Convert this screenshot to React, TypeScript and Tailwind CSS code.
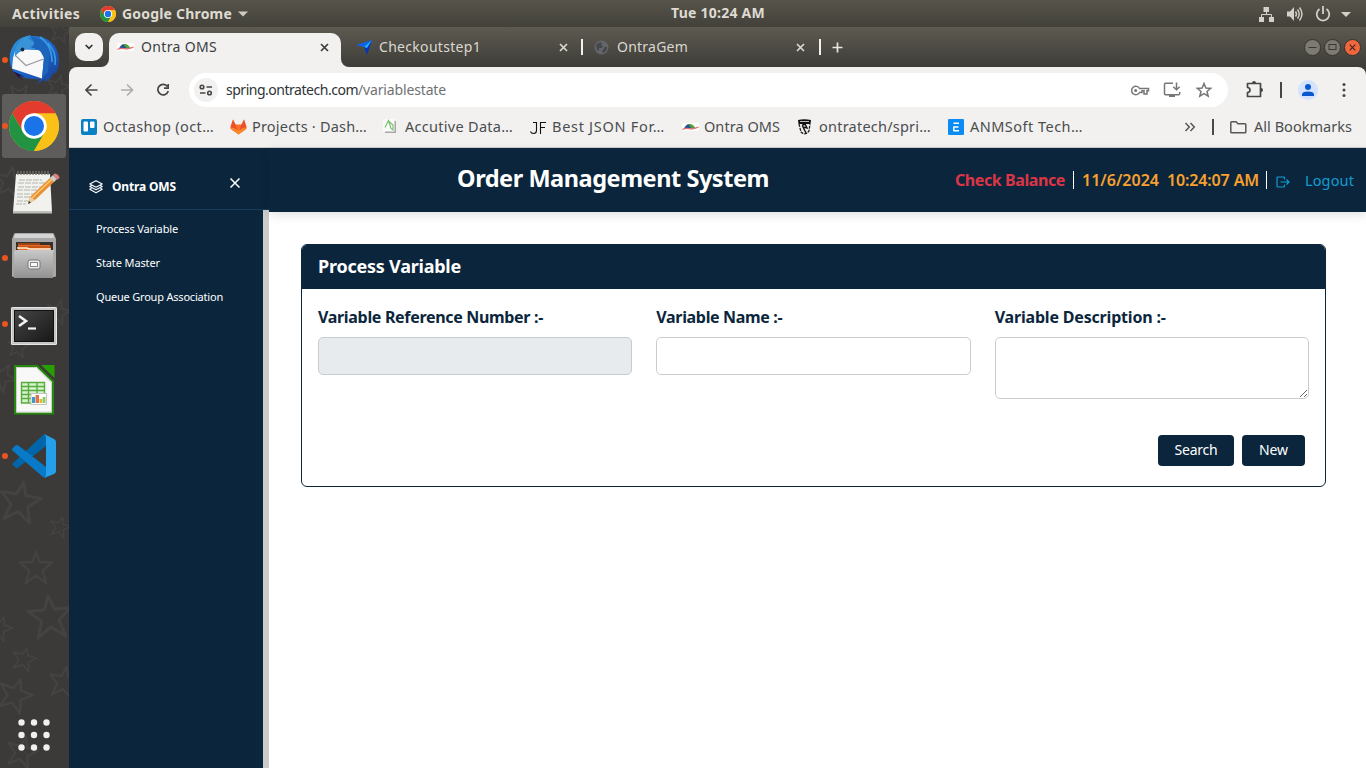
import { useLayoutEffect, useRef, type ReactNode } from "react";

/* Single line of text whose tracking is adjusted so that it spans `width` pixels. */
function Label({ text, width, className = "" }: { text: string; width: number; className?: string }) {
  const ref = useRef<HTMLSpanElement>(null);
  useLayoutEffect(() => {
    const el = ref.current;
    if (!el) return;
    el.style.letterSpacing = "0px";
    const natural = el.getBoundingClientRect().width;
    el.style.letterSpacing = `${(width - natural) / text.length}px`;
  }, [text, width]);
  return (
    <span className={`block shrink-0 whitespace-nowrap ${className}`} style={{ width }}>
      <span ref={ref}>{text}</span>
    </span>
  );
}

function ChromeLogo({ size }: { size: number }) {
  return (
    <svg width={size} height={size} viewBox="0 0 50 50" className="shrink-0">
      <circle cx="25" cy="25" r="25" fill="#fbc116" />
      <path d="M25 12.5 H46.7 A25 25 0 0 0 3.4 12.5 L14 31 Z" fill="#e33b2e" />
      <path d="M3.4 12.5 A25 25 0 0 0 25 50 L36 31.2 L14.2 31.2 Z" fill="#229342" />
      <path d="M25 50 A25 25 0 0 0 46.7 12.5 H25 L35.8 31.2 Z" fill="#fbc116" />
      <circle cx="25" cy="25" r="12.7" fill="#fff" />
      <circle cx="25" cy="25" r="10" fill="#1a73e8" />
    </svg>
  );
}

function Swoosh() {
  return (
    <svg width="17" height="16" viewBox="0 0 17 16" className="shrink-0">
      <rect y="4" width="17" height="8" fill="#fff" opacity=".75" />
      <path d="M2 9.500 Q5 3.500 9 5.500 L12 9.500 Z" fill="#23548c" />
      <path d="M6 5.200 Q11 4.500 13.500 9.500 L9.500 9 Z" fill="#54a03c" />
      <path d="M0.500 10.500 Q3 9 6 9.500 T10 10 T16.500 8" fill="none" stroke="#e9696c" strokeWidth="1.200" />
    </svg>
  );
}

function Cross({ className }: { className: string }) {
  return (
    <svg width="9" height="9" viewBox="0 0 9 9" className={className}>
      <path d="M1 1 L8 8 M8 1 L1 8" stroke="currentColor" strokeWidth="1.7" />
    </svg>
  );
}

function TopBar() {
  return (
    <div className="flex h-[27px] shrink-0 items-center bg-linear-to-b from-[#57544a] to-[#42413a] text-[14px] font-bold text-[#dfdbd2]">
      <Label text="Activities" width={68} className="ml-3" />
      <div className="ml-5 flex items-center">
        <ChromeLogo size={16} />
        <Label text="Google Chrome" width={110} className="ml-1.5" />
        <svg width="10" height="6" className="ml-[6px]"><path d="M0 0.5H10L5 5.5Z" fill="#cfccc4" /></svg>
      </div>
      <Label text="Tue 10:24 AM" width={94} className="ml-[423px] pb-0.5" />
      <svg width="94" height="20" viewBox="1258 3 94 20" className="ml-[493px]" fill="#d3d0c9">
        <path d="M1263.5 6h5.5v5h-5.500z M1259 16h5v5h-5z M1269 16h5v5h-5z" />
        <path d="M1266.500 11v3 M1261.500 16v-2.500h10v2.500" fill="none" stroke="#d3d0c9" />
        <path d="M1287 10.500h3l4-4.500v14l-4-4.500h-3z" />
        <g fill="none" stroke="#d3d0c9" strokeWidth="1.400">
          <path d="M1295.500 10.500q2 2.500 0 5M1297.500 8.500q3.500 4.500 0 9M1299.500 6.500q5 6.500 0 13" />
        </g>
        <path d="M1319.500 8a6.300 6.300 0 1 0 7 0M1323 5v8" fill="none" stroke="#d3d0c9" strokeWidth="1.800" />
        <path d="M1341 11h10l-5 5z" />
      </svg>
    </div>
  );
}

function DockItem({ running = false, active = false, children }: { running?: boolean; active?: boolean; children: ReactNode }) {
  return (
    <div className="h-[66px] w-[69px] shrink-0">
      <svg width="69" height="66" viewBox="0 0 69 66">
        {active && <rect x="2" y="1" width="64" height="64" rx="3" fill="#5f5d5b" />}
        {running && <circle cx="5" cy="33" r="3" fill="#e95420" />}
        {children}
      </svg>
    </div>
  );
}

const STAR = "M0 -17 L4 -6 L17 -6 L7 3 L11 16 L0 8 L-11 16 L-7 3 L-17 -6 L-4 -6 Z";
const STARS = [
  [60, 5, 0.6, 10], [20, 70, 0.8, 30], [10, 155, 0.9, 10], [58, 60, 0.7, 15], [58, 285, 0.7, 15], [18, 320, 0.6, 10],
  [2, 350, 0.8, 30], [20, 475, 1.2, 10], [60, 500, 0.6, 15], [36, 541, 0.95, 0], [50, 590, 1.25, -5],
  [0, 601, 0.7, 20], [24, 632, 0.7, 15], [15, 668, 1.0, 20], [64, 655, 0.9, 10], [22, 725, 0.9, 15],
];

function Dock() {
  return (
    <div className="relative flex w-[69px] shrink-0 flex-col bg-[#3b3a38]">
      <svg className="absolute inset-0" width="69" height="741">
        {STARS.map(([x, y, s, r]) => (
          <path key={`${x}-${y}`} d={STAR} transform={`translate(${x} ${y}) rotate(${r}) scale(${s})`} fill="none" stroke="#444341" strokeWidth="2.500" strokeLinejoin="round" />
        ))}
      </svg>
      <div className="relative flex grow flex-col">
        <DockItem running>
          <defs>
            <linearGradient id="tb" x1="0" y1="0" x2="1" y2="1"><stop offset="0" stopColor="#2f9be6" /><stop offset=".5" stopColor="#1c62c8" /><stop offset="1" stopColor="#173f93" /></linearGradient>
          </defs>
          <path d="M18 13 Q23 9 31 9 Q43 8 51 15 Q59 22 59 34 Q59 42 55 47 L54 45 Q51 52 45 55 L45 52 L37 57 L40 52 Q24 53 15 47 Q8 38 10 27 Q12 18 18 13Z" fill="url(#tb)" />
          <path d="M11 37 L13 44 L25 50 L19 49 L23 53 Q12 47 11 37Z" fill="#231047" />
          <path d="M15 24 L24 22.500 L40 23 L44 31 L42 51.500 L12 41.500 L13 31Z" fill="#f8f8f8" />
          <path d="M16 29 L26 38.500 L43.500 32" fill="none" stroke="#9a9aa0" strokeWidth="1.200" />
          <path d="M19 16 Q22 9 31 8 L28 12 Q35 14 37 20 L33 23 Q26 20 22 24 Q18 25 15 30 Q14 21 19 16Z" fill="#3993d7" />
          <path d="M30 9 Q48 12 49 27 L48 45 L42 51 L44 30 Q41 22 30 20 Q38 18 30 9Z" fill="#1d65bb" />
          <path d="M48 16q9 9 7 22M40 10q12 8 12 25" fill="none" stroke="#3a9be2" strokeWidth="1.600" />
          <circle cx="22.500" cy="22.500" r="1.900" fill="#172c4d" />
        </DockItem>
        <DockItem running active>
          <svg x="9" y="8" width="50" height="50"><ChromeLogo size={50} /></svg>
        </DockItem>
        <DockItem>
          <path d="M16 15H50L52 53H13Z" fill="#f1f1ee" />
          <path d="M13 52H52V54.500H13Z" fill="#bdbdb9" />
          <path d="M18 12v4M21 12v4M24 12v4M27 12v4M30 12v4M33 12v4M36 12v4M39 12v4M42 12v4M45 12v4M48 12v4" stroke="#77766f" strokeWidth="1.300" />
          <path d="M19 21h23M18 24h27M18 28h24M17 31h25M17 35h20M17 38h21M17 42h12M16 45h10" stroke="#b5b5af" strokeDasharray="6 1" />
          <path d="M28 45 L30 38 L51 18 L55 22 L35 41Z" fill="#e98f30" />
          <path d="M31 40 L52 20" stroke="#ffc777" strokeWidth="1.500" />
          <path d="M28 45 L30 38 L35 41Z" fill="#e8cfaa" /><path d="M28 45l1-3 2 1.500z" fill="#333" />
          <path d="M50 19l3-3 4 4-3 3z" fill="#ccc" /><path d="M53 16q2-3 5 0t0 4l-1 1z" fill="#db7f7d" />
        </DockItem>
        <DockItem running>
          <defs><linearGradient id="cab" x1="0" y1="0" x2="0" y2="1"><stop stopColor="#c8c8c8" /><stop offset="1" stopColor="#929292" /></linearGradient></defs>
          <path d="M14 9Q14 8 16 8H52Q54 8 54 9L56 14V51Q56 52 54 52H14Q12 52 12 51V14Z" fill="#a8a8a8" />
          <path d="M15 9H53L54 13H14Z" fill="#d4d4d4" />
          <rect x="16" y="17" width="37" height="12" fill="#36312c" />
          <path d="M18 20H50V28H18Z" fill="#e76d23" /><path d="M18 19H40M18 22H51" stroke="#bb4b13" strokeWidth="1.500" /><path d="M17 23H27L29 24H51" stroke="#fff0dc" strokeWidth="1.500" fill="none" />
          <path d="M15 25H54V27H53V53H14V27Z" fill="url(#cab)" />
          <rect x="28" y="35" width="12" height="9" rx="2" fill="#ececec" stroke="#777" /><rect x="30.500" y="37.500" width="7" height="4" fill="#fafafa" stroke="#888" />
        </DockItem>
        <DockItem running>
          <defs><linearGradient id="term" x1="0" y1="0" x2="1" y2="1"><stop stopColor="#464646" /><stop offset="1" stopColor="#171717" /></linearGradient></defs>
          <rect x="11" y="16" width="46" height="38" rx="1.500" fill="#c6c6c6" />
          <rect x="11.500" y="16.500" width="45" height="37" rx="1" fill="none" stroke="#e6e6e6" />
          <rect x="14.500" y="19.500" width="39" height="31" fill="url(#term)" stroke="#111" />
          <path d="M19 25L26 30L19 35" fill="none" stroke="#f3f3f3" strokeWidth="2.600" /><path d="M28 37.500H36" stroke="#f3f3f3" strokeWidth="2.200" />
        </DockItem>
        <DockItem>
          <path d="M15 9H37L53 24.500V56.500H15Z" fill="#f8f8f8" stroke="#238a0b" strokeWidth="2" />
          <path d="M16.500 10.500H36L51.500 26V55H16.500Z" fill="none" stroke="#cfcfcf" />
          <path d="M41 8H54.500V21Z" fill="#26a000" />
          <rect x="21" y="25" width="24" height="21" fill="#d5f2cb" />
          <path d="M21.500 25.500H44.500V46H21.500ZM21 29.500H45M21 33.500H45M21 37.500H45M21 41.500H45M28.500 25V46M37 25V46" fill="none" stroke="#57ac3c" strokeWidth="1.400" />
          <rect x="31" y="36.500" width="15.500" height="11" fill="#fff" stroke="#c4c4c4" />
          <path d="M32 40h3v6h-3z" fill="#3b98cf" /><path d="M35.500 38h3.500v8h-3.500z" fill="#e47247" /><path d="M39.500 42h2.500v4h-2.500z" fill="#e8b52e" /><path d="M42.500 40h3v6h-3z" fill="#8ecb66" />
        </DockItem>
        <DockItem running>
          <path d="M12 41L16 45Q17 46 19 44L46 23V11L43 12Z" fill="#0065a9" />
          <path d="M12 26L16 22Q17 21.500 19 23L46 44V55L43 54L13 28Q11 27 12 26Z" fill="#087ac7" />
          <path d="M44 11L54 16Q56 17 56 19V48Q56 50 54 51L44 55Q46 54 46 51V15Q46 12 44 11Z" fill="#249fea" />
        </DockItem>
        <div className="mt-auto">
          <DockItem>
            {[21.5, 34, 46.5].map((x) => [20.5, 33, 45.5].map((y) => <circle key={`${x}-${y}`} cx={x} cy={y} r="3.2" fill="#f1f0ee" />))}
          </DockItem>
        </div>
      </div>
    </div>
  );
}

function TabStrip() {
  return (
    <div className="flex h-10 shrink-0 items-center bg-linear-to-b from-[#5d5a51] to-[#3e3d38] text-[14px] text-[#dbd8d1]">
      <div className="ml-[6px] flex h-7 w-7 items-center justify-center rounded-[10px] bg-[#f2f1f0]">
        <svg width="8" height="6"><path d="M0.700 1L4 4.300L7.300 1" fill="none" stroke="#2e3436" strokeWidth="1.700" /></svg>
      </div>
      <div className="relative ml-[6px] flex h-[34px] w-[232px] items-center self-end rounded-t-[10px] bg-[#f2f1f0] pb-[6px] text-[#3c3f41]">
        <svg className="absolute bottom-0 -left-2" width="8" height="8"><path d="M8 0V8H0A8 8 0 0 0 8 0Z" fill="#f2f1f0" /></svg>
        <svg className="absolute -right-2 bottom-0" width="8" height="8"><path d="M0 0V8H8A8 8 0 0 1 0 0Z" fill="#f2f1f0" /></svg>
        <div className="ml-2"><Swoosh /></div>
        <Label text="Ontra OMS" width={76} className="ml-[7px] pb-0.5" />
        <Cross className="ml-[103px] text-[#3c3f41]" />
      </div>
      <svg width="16" height="15" viewBox="0 0 16 15" className="ml-[15px]">
        <path d="M0 5L16 0L13 6L8 7Z" fill="#1163e8" /><path d="M16 0L11 15L8 7Z" fill="#0636b8" /><path d="M16 0L8 7L11 8Z" fill="#20b3f8" />
      </svg>
      <Label text="Checkoutstep1" width={102} className="ml-[7px] pb-0.5" />
      <Cross className="ml-[78px]" />
      <div className="ml-[13px] h-4 w-0.5 bg-[#f2f1f0]" />
      <svg width="15" height="15" viewBox="0 0 15 15" className="ml-[11px]">
        <circle cx="7.500" cy="7.500" r="7" fill="#62656a" />
        <path d="M2 5q4-4 6-2l-1 2 2 1-1 2-3 0 0 3-2-1zM10 7l3 0q0 4-4 6l-1-2 2-2z" fill="#46474a" />
      </svg>
      <Label text="OntraGem" width={71} className="ml-[8px] pb-0.5" />
      <Cross className="ml-[108px]" />
      <div className="ml-[14px] h-4 w-0.5 bg-[#f2f1f0]" />
      <svg width="11" height="11" className="ml-[11px]"><path d="M5.500 0.500V10.500M0.500 5.500H10.500" stroke="#e8e6e1" strokeWidth="1.700" /></svg>
      <div className="mr-[5px] ml-auto flex gap-[3px]">
        <svg width="17" height="17"><circle cx="8.500" cy="8.500" r="8" fill="#7d7a72" stroke="#36352f" /><path d="M4.500 8.500H12.500" stroke="#393832" /></svg>
        <svg width="17" height="17"><circle cx="8.500" cy="8.500" r="8" fill="#7d7a72" stroke="#36352f" /><rect x="5" y="5.500" width="7" height="5" fill="none" stroke="#393832" /></svg>
        <svg width="17" height="17"><circle cx="8.500" cy="8.500" r="8" fill="#f0663d" stroke="#36352f" /><path d="M5.700 5.700L11.300 11.300M11.300 5.700L5.700 11.300" stroke="#46261b" strokeWidth="1.200" /></svg>
      </div>
    </div>
  );
}

function Toolbar() {
  return (
    <div className="shrink-0 bg-[#3e3d38]">
      <div className="flex h-[46px] items-center rounded-t-[8px] bg-[#f2f1f0] text-[14px] text-[#2e3436]">
        <svg width="84" height="20" viewBox="85 80 84 20" className="ml-4 shrink-0" fill="none" stroke="#454746" strokeWidth="1.700">
          <path d="M97.500 90H86M91.500 84.500L86 90L91.500 95.500" />
          <path d="M121 90H132.500M127 84.500L132.500 90L127 95.500" stroke="#adadac" />
          <path d="M167.500 86.500A5.300 5.300 0 1 0 168.300 91M168.300 84V88.200H164" />
        </svg>
        <div className="ml-5 flex h-[34px] w-[1039px] items-center rounded-full bg-white pl-[5px]">
          <div className="flex h-6 w-6 items-center justify-center rounded-full bg-[#f2f1f0]">
            <svg width="14" height="12" fill="none" stroke="#454746" strokeWidth="1.600"><circle cx="3" cy="3" r="1.800" /><path d="M7.500 3H13M1 9H6.500" /><circle cx="10.500" cy="9" r="1.800" /></svg>
          </div>
          <Label text="spring.ontratech.com" width={132} className="ml-[8px] pb-0.5" />
          <Label text="/variablestate" width={88} className="pb-0.5 text-[#6f7273]" />
          <svg width="83" height="20" viewBox="1130 80 83 20" className="ml-[684px]" fill="none" stroke="#747775" strokeWidth="1.500">
            <path d="M1139.500 88.500A4.200 4.200 0 1 0 1139.500 92.500H1142V90.800H1144V94H1147V90.800H1148.500V88.500Z" /><circle cx="1135.700" cy="90.500" r="1.500" fill="#747775" stroke="none" />
            <path d="M1173 83.300H1165.500Q1164.500 83.300 1164.500 84.500V93.500Q1164.500 94.700 1165.500 94.700H1178.500Q1179.700 94.700 1179.700 93.500V92M1176.500 82.500V89.500M1173.300 86.700L1176.500 89.800L1179.700 86.700" />
            <path d="M1169 95H1175V97H1169Z" fill="#747775" stroke="none" />
            <path d="M1204 83.500L1205.900 88L1210.700 88.400L1207 91.500L1208.200 96.200L1204 93.700L1199.800 96.200L1201 91.500L1197.300 88.400L1202.100 88Z" />
          </svg>
        </div>
        <svg width="108" height="24" viewBox="1244 78 108 24" className="ml-4 shrink-0">
          <path d="M1247.500 83.500H1260.500V96.500H1247.500V92.500Q1250 92.300 1250 90T1247.500 87.500Z" fill="none" stroke="#454746" strokeWidth="1.700" strokeLinejoin="round" />
          <path d="M1252 83a2 2 0 0 1 4 0zM1261 88a2 2 0 0 1 0 4z" fill="#454746" />
          <path d="M1280 82h2v16h-2z" fill="#454746" />
          <circle cx="1308" cy="90" r="10" fill="#d3e3fd" /><circle cx="1308" cy="87" r="3" fill="#0b57d0" /><path d="M1302 96V94.500Q1302 91.500 1308 91.500T1314 94.500V96Z" fill="#0b57d0" />
          <circle cx="1344" cy="84.500" r="1.500" fill="#454746" /><circle cx="1344" cy="90" r="1.500" fill="#454746" /><circle cx="1344" cy="95.500" r="1.500" fill="#454746" />
        </svg>
      </div>
    </div>
  );
}

function Bookmark({ text, width, className, icon }: { text: string; width: number; className: string; icon: ReactNode }) {
  return (
    <div className={`flex shrink-0 items-center ${className}`}>
      <div className="flex w-[22px] shrink-0">{icon}</div>
      <Label text={text} width={width} />
    </div>
  );
}

function Bookmarks() {
  return (
    <div className="flex h-[35px] shrink-0 items-center border-b border-[#cdcbc9] bg-[#f2f1f0] pb-[7px] text-[14.5px] text-[#4a4d4f]">
      <Bookmark className="ml-3" text="Octashop (oct…" width={111} icon={<svg width="16" height="16"><rect width="16" height="16" rx="2" fill="#0a80c4" /><rect x="2.500" y="2.500" width="4.500" height="10" rx="1" fill="#fff" /><rect x="9" y="2.500" width="4.500" height="6.500" rx="1" fill="#fff" /></svg>} />
      <Bookmark className="ml-[16px]" text="Projects · Dash…" width={115} icon={<svg width="17" height="16" viewBox="0 0 17 16"><path d="M3 0.500L0.500 8Q0 10 2 11L8.500 15.500L15 11Q17 10 16.500 8L14 0.500L11.500 5.500H5.500Z" fill="#fc6d26" /><path d="M3 0.500L0.500 8L8.500 15.500L5.500 5.500ZM14 0.500L16.500 8L8.500 15.500L11.500 5.500Z" fill="#e8452c" opacity=".75" /><path d="M0.500 8.500L8.500 15.500L16.500 8.500L13 9L8.500 12L4 9Z" fill="#fca326" opacity=".7" /></svg>} />
      <Bookmark className="ml-[16px]" text="Accutive Data…" width={108} icon={<svg width="16" height="16"><path d="M2 2H13V14H2Z" fill="#a9a8a6" /><rect width="11.500" height="12.500" fill="#fafafa" /><path d="M2 8.500L5.500 1.500L8 9.500L10 11V6L5.500 2" fill="none" stroke="#6fc067" strokeWidth="1.100" /></svg>} />
      <Bookmark className="ml-[17px]" text="Best JSON For…" width={113} icon={<svg width="17" height="16"><path d="M6.500 3V11.500Q6.500 14.500 3.500 14.500Q1 14.500 0.500 12.500M3 3.500H7M10.500 15V3.500H16M10.500 8.500H15" fill="none" stroke="#111" strokeWidth="1.100" /></svg>} />
      <Bookmark className="ml-[17px]" text="Ontra OMS" width={76} icon={<Swoosh />} />
      <Bookmark className="ml-[17px]" text="ontratech/spri…" width={112} icon={<svg width="16" height="16"><path d="M1 1Q7 -0.500 14 1L13.500 5H1.500Z" fill="#111" /><path d="M2 5L4 13Q8 17 12 12L13 5" fill="#eee" stroke="#222" strokeWidth="1.300" strokeDasharray="3 1" /><path d="M2.500 3.500H13M5 6.500L8 5L10 9L6 8L9 14" fill="none" stroke="#111" strokeWidth="1.400" /><path d="M3 2.500H12" stroke="#eee" strokeWidth=".8" /></svg>} />
      <Bookmark className="ml-[17px]" text="ANMSoft Tech…" width={113} icon={<svg width="16" height="16"><rect width="16" height="16" rx="1" fill="#0b8cf5" /><path d="M5.500 4.200H11M5.500 8H10.500M5.500 11.800H11M5.800 7.500V12" fill="none" stroke="#fff" strokeWidth="1.500" /></svg>} />
      <svg width="64" height="18" viewBox="1184 118 64 18" className="ml-[101px] shrink-0" fill="none" stroke="#555759" strokeWidth="1.500">
        <path d="M1185.500 123L1189.300 127L1185.500 131M1190.500 123L1194.300 127L1190.500 131" />
        <path d="M1213 119V135" stroke="#4b4941" strokeWidth="2" />
        <path d="M1230.800 122.500Q1230.800 121.700 1231.600 121.700H1236L1238 123.700H1245Q1245.800 123.700 1245.800 124.500V132Q1245.800 132.800 1245 132.800H1231.600Q1230.800 132.800 1230.800 132Z" />
      </svg>
      <Label text="All Bookmarks" width={98} className="ml-[6px]" />
    </div>
  );
}

function Sidebar() {
  return (
    <aside className="flex w-[200px] shrink-0 flex-col bg-[#0b263c] text-white">
      <div className="flex h-[62px] shrink-0 border-b border-[#183c5a] pt-[28px]">
        <svg width="14" height="14" viewBox="0 0 14 14" className="mt-1 ml-5" fill="none" stroke="#fff" strokeWidth="1.100" strokeLinejoin="round">
          <path d="M7 0.700L13.200 4L7 7.300L0.800 4ZM2.500 5.500L0.800 6.500L7 9.700L13.200 6.500L11.500 5.500M2.500 8.200L0.800 9.200L7 12.700L13.200 9.200L11.500 8.200" />
        </svg>
        <Label text="Ontra OMS" width={64} className="ml-[9px] text-[12px] leading-[21px] font-bold" />
        <svg width="12" height="12" viewBox="0 0 12 12" className="mt-px ml-[53px]"><path d="M1.500 1.500L10.500 10.500M10.500 1.500L1.500 10.500" stroke="#fff" strokeWidth="1.500" /></svg>
      </div>
      <div className="flex grow flex-col gap-[17px] border-r-[6px] border-[#cbcbcb] pt-[10px] pl-[27px] text-[11px] leading-[17px]">
        <Label text="Process Variable" width={82} />
        <Label text="State Master" width={64} />
        <Label text="Queue Group Association" width={127} />
      </div>
    </aside>
  );
}

function PageHeader() {
  return (
    <header className="flex h-16 shrink-0 items-center bg-[#0b263c] text-[16px] font-semibold text-white shadow-[0_3px_10px_rgba(0,0,0,0.12)]">
      <Label text="Order Management System" width={312} className="ml-[188px] pb-0.5 text-[23.5px] font-bold" />
      <Label text="Check Balance" width={110} className="ml-[186px] font-bold text-[#dc3545]" />
      <div className="ml-[8px] h-[18px] w-px bg-white" />
      <Label text="11/6/2024" width={77} className="ml-[8px] text-[#f9a12e]" />
      <Label text="10:24:07 AM" width={92} className="ml-[8px] text-[#f9a12e]" />
      <div className="ml-[7px] h-[18px] w-px bg-white" />
      <svg width="14" height="12" viewBox="0 0 14 12" className="mt-[3px] ml-[9px]" fill="none" stroke="#129cd4" strokeWidth="1.200">
        <path d="M8.500 3.500V2Q8.500 1 7.500 1H2Q1 1 1 2V10Q1 11 2 11H7.500Q8.500 11 8.500 10V8.500M4.500 6H13M10.500 3.500L13 6L10.500 8.500" />
      </svg>
      <Label text="Logout" width={49} className="mt-0.5 ml-[15px] text-[14.5px] font-normal text-[#129cd4]" />
    </header>
  );
}

function ProcessForm() {
  return (
    <section className="mx-8 mt-8 h-[243px] w-[1025px] overflow-hidden rounded-[6px] border border-[#0b263c] text-[#0b263c]">
      <div className="flex h-[44px] items-center bg-[#0b263c] pb-0.5 pl-4 text-[18px] font-bold text-white">
        <Label text="Process Variable" width={143} />
      </div>
      <div className="grid h-[146px] grid-cols-3 items-start gap-x-6 px-4 pt-4 text-[16px] font-bold">
        <div>
          <Label text="Variable Reference Number :-" width={225} />
          <input disabled className="mt-2 block h-[38px] w-full rounded-[5px] border border-[#c9cccf] bg-[#e7ebee]" />
        </div>
        <div>
          <Label text="Variable Name :-" width={126} />
          <input className="mt-2 block h-[38px] w-full rounded-[5px] border border-[#c9cccf]" />
        </div>
        <div>
          <Label text="Variable Description :-" width={171} />
          <textarea className="mt-2 block h-[62px] w-full rounded-[5px] border border-[#c9cccf]" />
        </div>
      </div>
      <div className="flex justify-end gap-2 pr-5 text-[14px] text-white">
        <button className="flex h-[31px] w-[76px] items-center justify-center rounded-[4px] bg-[#0b263c] pb-0.5"><Label text="Search" width={43} className="text-left" /></button>
        <button className="flex h-[31px] w-[63px] items-center justify-center rounded-[4px] bg-[#0b263c] pb-0.5"><Label text="New" width={29} className="text-left" /></button>
      </div>
    </section>
  );
}

export default function App() {
  return (
    <div className="flex h-[768px] w-[1366px] flex-col overflow-hidden bg-white font-['Noto_Sans',sans-serif]">
      <TopBar />
      <div className="flex grow">
        <Dock />
        <div className="flex w-[1297px] shrink-0 flex-col">
          <TabStrip />
          <Toolbar />
          <Bookmarks />
          <div className="flex grow">
            <Sidebar />
            <main className="flex grow flex-col">
              <PageHeader />
              <ProcessForm />
            </main>
          </div>
        </div>
      </div>
    </div>
  );
}
